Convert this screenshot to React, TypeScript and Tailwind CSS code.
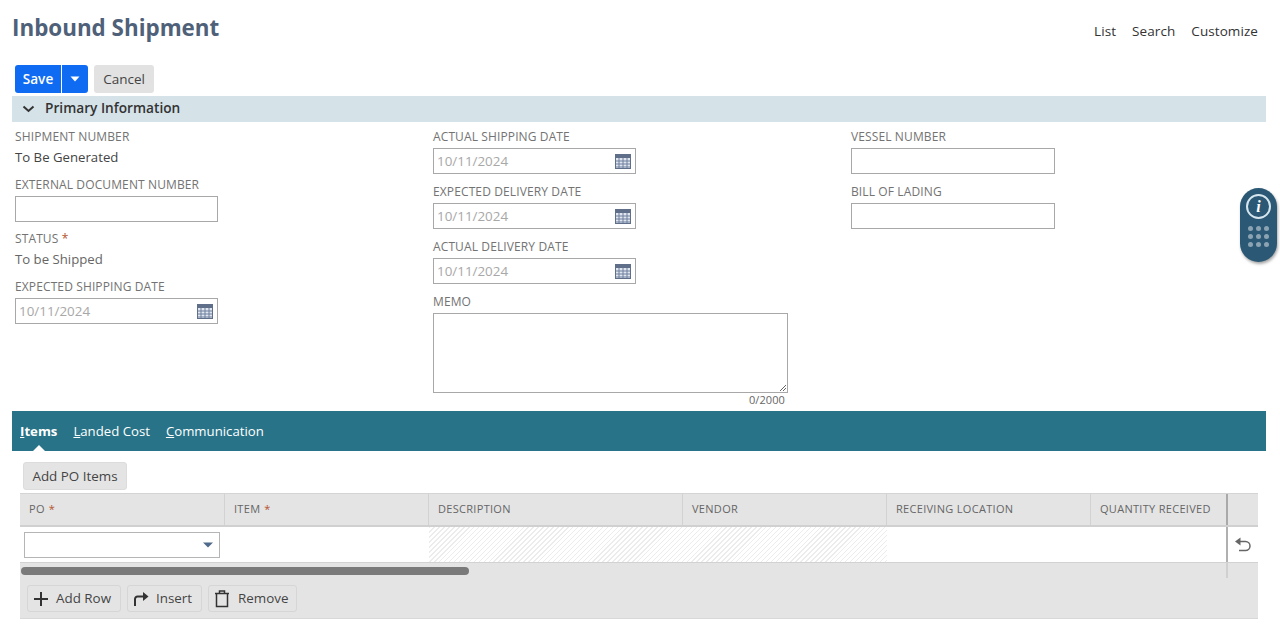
import React from "react";

const Cal = () => (
  <svg width="16" height="15" viewBox="0 0 16 15" className="shrink-0">
    <rect x="0.5" y="0.5" width="15" height="14" fill="#dfe6f0" stroke="#5f6f8a" />
    <rect x="0" y="0" width="16" height="4" fill="#5f6f8a" />
    <path d="M4 4v10M8 4v10M12 4v10M1 7h14M1 10h14M1 13h14" stroke="#6f7f9c" strokeWidth="1" fill="none" />
  </svg>
);

const Label = ({ children, star }: { children: React.ReactNode; star?: boolean }) => (
  <div className="text-[12px] leading-[16px] tracking-[0.12px] text-[#737373] uppercase">
    {children}
    {star && <span className="text-[#b5532c]"> *</span>}
  </div>
);

const Input = ({ w = "w-[203px]" }: { w?: string }) => (
  <div className={`${w} h-[26px] border border-[#a8a8a8] bg-white`} />
);

const DateInput = () => (
  <div className="w-[203px] h-[26px] border border-[#a8a8a8] bg-white flex items-center justify-between pl-[3px] pr-[4px] text-[13.4px] text-[#a8a8a8]">
    <span>10/11/2024</span>
    <Cal />
  </div>
);

const Th = ({ children, w, star, last }: { children: React.ReactNode; w: string; star?: boolean; last?: boolean }) => (
  <div className={`${w} shrink-0 h-full flex items-center pl-[9px] text-[11px] tracking-[0.3px] text-[#666] ${last ? "" : "border-r border-[#d2d2d2]"}`}>
    {children}
    {star && <span className="text-[#b5532c] ml-1">*</span>}
  </div>
);

const FootBtn = ({ icon, label, w }: { icon: React.ReactNode; label: string; w: string }) => (
  <div className={`${w} h-[27px] rounded-[3px] border border-[#d6d6d6] bg-[#e4e4e4] flex items-center text-[13.4px] text-[#444]`}>
    {icon}
    <span>{label}</span>
  </div>
);

export default function App() {
  return (
    <div className="relative w-[1280px] h-[624px] overflow-hidden bg-white font-['Open_Sans',sans-serif]">
      {/* Header */}
      <div className="h-[65px] pl-[12px] pr-[22px] flex justify-between">
        <h1 className="text-[22.4px] leading-[30px] pt-[13px] font-bold text-[#4f6079] h-fit box-content">Inbound Shipment</h1>
        <div className="flex gap-[16px] text-[13.5px] tracking-[0.08px] leading-[20px] text-[#333] pt-[21px]">
          <span>List</span>
          <span>Search</span>
          <span>Customize</span>
        </div>
      </div>

      {/* Buttons */}
      <div className="pl-[15px] flex h-[28px] gap-[6px]">
        <div className="flex gap-px">
          <div className="w-[46px] h-[28px] rounded-l-[3px] bg-[#0f6cf2] text-white font-semibold text-[13.6px] flex items-center justify-center">Save</div>
          <div className="w-[26px] h-[28px] rounded-r-[3px] bg-[#0f6cf2] flex items-center justify-center">
            <svg width="10" height="6" viewBox="0 0 10 6"><path d="M0.5 0.5h9L5 5.500z" fill="#fff" /></svg>
          </div>
        </div>
        <div className="w-[60px] h-[28px] rounded-[3px] bg-[#e2e2e2] text-[#444] text-[13.5px] font-medium flex items-center justify-center">Cancel</div>
      </div>

      {/* Section header */}
      <div className="mt-[3px] ml-[12px] w-[1254px] h-[26px] bg-[#d5e2e8] flex items-center pl-[10px] gap-[10px] text-[13.7px] font-semibold text-[#333] pb-[1px]">
        <svg width="13" height="8" viewBox="0 0 13 8"><path d="M1.500 1.500L6.500 6l5-4.500" stroke="#333" strokeWidth="2" fill="none" /></svg>
        <span>Primary Information</span>
      </div>

      {/* Fields */}
      <div className="h-[289px] flex pl-[15px] pt-[7px]">
        <div className="w-[418px]">
          <Label>Shipment Number</Label>
          <div className="text-[13.2px] leading-[20px] text-[#444] mt-[2px]">To Be Generated</div>
          <div className="mt-[10px]"><Label>External Document Number</Label></div>
          <div className="mt-[3px]"><Input /></div>
          <div className="mt-[9px]"><Label star>Status</Label></div>
          <div className="text-[13.2px] leading-[20px] text-[#666] mt-[2px]">To be Shipped</div>
          <div className="mt-[10px]"><Label>Expected Shipping Date</Label></div>
          <div className="mt-[3px]"><DateInput /></div>
        </div>
        <div className="w-[418px]">
          <Label>Actual Shipping Date</Label>
          <div className="mt-[3px]"><DateInput /></div>
          <div className="mt-[10px]"><Label>Expected Delivery Date</Label></div>
          <div className="mt-[3px]"><DateInput /></div>
          <div className="mt-[10px]"><Label>Actual Delivery Date</Label></div>
          <div className="mt-[3px]"><DateInput /></div>
          <div className="mt-[10px]"><Label>Memo</Label></div>
          <div className="mt-[3px] relative w-[355px] h-[80px] border border-[#a8a8a8] bg-white">
            <svg width="8" height="8" viewBox="0 0 8 8" className="absolute right-0 bottom-0">
              <path d="M7 1L1 7M7 4L4 7" stroke="#666" strokeWidth="1" />
            </svg>
          </div>
          <div className="w-[352px] text-right text-[11px] leading-[14px] tracking-[0.1px] text-[#666]">0/2000</div>
        </div>
        <div>
          <Label>Vessel Number</Label>
          <div className="mt-[3px]"><Input w="w-[204px]" /></div>
          <div className="mt-[10px]"><Label>Bill of Lading</Label></div>
          <div className="mt-[3px]"><Input w="w-[204px]" /></div>
        </div>
      </div>

      {/* Tabs */}
      <div className="relative ml-[12px] w-[1254px] h-[40px] bg-[#287387] flex items-center pl-[8px] gap-[16px] text-[13.2px] text-white pt-[1px]">
        <span className="font-bold"><u>I</u>tems</span>
        <span><u>L</u>anded Cost</span>
        <span><u>C</u>ommunication</span>
        <div className="absolute left-[21px] bottom-0 w-0 h-0 border-x-[6px] border-x-transparent border-b-[6px] border-b-white" />
      </div>

      {/* Add PO Items */}
      <div className="pl-[23px] pt-[11px]">
        <div className="w-[104px] h-[28px] rounded-[3px] bg-[#e4e4e4] border border-[#dcdcdc] text-[13.4px] text-[#444] flex items-center justify-center">Add PO Items</div>
      </div>

      {/* Table */}
      <div className="mt-[3px] ml-[20px] w-[1238px]">
        <div className="h-[34px] flex bg-[#e4e4e4] border-t border-[#d4d4d4] border-b-2 border-b-[#d0d0d0]">
          <Th w="w-[205px]" star>PO</Th>
          <Th w="w-[204px]" star>ITEM</Th>
          <Th w="w-[254px]">DESCRIPTION</Th>
          <Th w="w-[204px]">VENDOR</Th>
          <Th w="w-[204px]">RECEIVING LOCATION</Th>
          <Th w="w-[135px]" last>QUANTITY RECEIVED</Th>
          <div className="flex-1 border-l-2 border-[#a9a9a9]" />
        </div>
        <div className="h-[36px] flex bg-white border-b border-[#d2d2d2]">
          <div className="w-[204px] shrink-0 pl-[4px] pt-[5px]">
            <div className="w-[196px] h-[26px] border border-[#b5b5b5] flex items-center justify-end pr-[6px]">
              <svg width="10" height="6" viewBox="0 0 10 6"><path d="M0 0.500h10L5 5.500z" fill="#4f6a8a" /></svg>
            </div>
          </div>
          <div className="w-[205px] shrink-0" />
          <div className="w-[458px] shrink-0 bg-[repeating-linear-gradient(135deg,#ececec_0px,#ececec_1px,#ffffff_1px,#ffffff_3.500px)]" />
          <div className="w-[339px] shrink-0" />
          <div className="flex-1 border-l-2 border-[#b0b0b0] flex items-center justify-center">
            <svg width="18" height="17" viewBox="0 0 18 17" fill="none" stroke="#666" strokeWidth="1.500">
              <path d="M3 5.500H11.500a4.500 4.500 0 0 1 0 9H5" />
              <path d="M6.500 1.500L1 5.500l5.500 4z" fill="#666" stroke="none" />
            </svg>
          </div>
        </div>
        <div className="relative h-[56px] bg-[#e4e4e4] border-b border-[#d8d8d8]">
          <div className="h-[15px] flex items-center pl-px">
            <div className="w-[448px] h-[8px] rounded-full bg-[#7a7a7a]" />
          </div>
          <div className="absolute right-[30px] top-0 w-[2px] h-[15px] bg-[#d0d0d0]" />
          <div className="flex gap-[6px] pl-[7px] pt-[7px]">
            <FootBtn
              w="w-[94px]"
              label="Add Row"
              icon={
                <svg width="16" height="16" viewBox="0 0 16 16" className="ml-[5px] mr-[7px]">
                  <path d="M8 1v14M1 8h14" stroke="#333" strokeWidth="2" />
                </svg>
              }
            />
            <FootBtn
              w="w-[75px]"
              label="Insert"
              icon={
                <svg width="16" height="16" viewBox="0 0 16 16" fill="none" className="ml-[5px] mr-[7px]">
                  <path d="M2 15V8a2.500 2.500 0 0 1 2.500-2.500H11" stroke="#333" strokeWidth="2" />
                  <path d="M10 1L15.500 5.500l-5.500 4.500z" fill="#333" />
                </svg>
              }
            />
            <FootBtn
              w="w-[89px]"
              label="Remove"
              icon={
                <svg width="16" height="18" viewBox="0 0 16 18" fill="none" stroke="#333" strokeWidth="1.500" className="ml-[5px] mr-[8px]">
                  <path d="M2.500 3.500h11V16.500h-11zM1 3.500h14M5.500 3.500V1h5v2.500" />
                </svg>
              }
            />
          </div>
        </div>
      </div>

      {/* Floating widget */}
      <div className="absolute left-[1240px] top-[188px] w-[37px] h-[74px] rounded-full bg-[#2b5874] shadow-[1px_2px_3px_rgba(0,0,0,0.35)] flex flex-col items-center pt-[6px]">
        <div className="w-[25px] h-[25px] rounded-full border-2 border-[#d6e6ee] flex items-center justify-center text-white font-['Liberation_Serif',serif] italic font-bold text-[16px] leading-none">i</div>
        <div className="mt-[7px] grid grid-cols-3 gap-[3px]">
          {Array.from({ length: 9 }).map((_, i) => (
            <div key={i} className="w-[5px] h-[5px] rounded-full bg-[#8ca3b3]" />
          ))}
        </div>
      </div>
    </div>
  );
}
